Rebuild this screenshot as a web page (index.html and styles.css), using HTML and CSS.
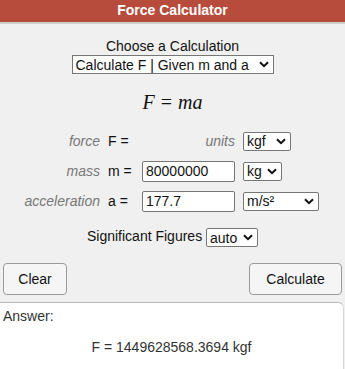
FILE: index.html
```html
<!DOCTYPE html>
<html>
<head>
    <title>Force Calculator</title>
    <link rel="stylesheet" href="styles.css">
</head>
<body>
    <div class="header">Force Calculator</div>

    <div class="chooser">
        <div class="chooser-label">Choose a Calculation</div>
        <select class="sel calc-select">
            <option>Calculate F | Given m and a</option>
        </select>
    </div>

    <div class="formula"><i>F</i><span class="eq">=</span><i>ma</i></div>

    <div class="rows">
        <div class="lbl">force</div>
        <div class="var">F =</div>
        <div class="units-lbl">units</div>
        <div><select class="sel sel-kgf"><option>kgf</option></select></div>

        <div class="lbl">mass</div>
        <div class="var">m =</div>
        <div><input type="text" class="num" value="80000000"></div>
        <div><select class="sel sel-kg"><option>kg</option></select></div>

        <div class="lbl">acceleration</div>
        <div class="var">a =</div>
        <div><input type="text" class="num" value="177.7"></div>
        <div><select class="sel sel-ms"><option>m/s²</option></select></div>
    </div>

    <div class="sigfig">
        Significant Figures
        <select class="sel sel-auto"><option>auto</option></select>
    </div>

    <div class="buttons">
        <button type="button" class="btn btn-clear">Clear</button>
        <button type="button" class="btn btn-calc">Calculate</button>
    </div>

    <div class="answer">
        <div class="answer-label">Answer:</div>
        <div class="answer-value">F = 1449628568.3694 kgf</div>
    </div>
</body>
</html>
```

FILE: styles.css
```css
body {
    font-family: Arial, "Liberation Sans", sans-serif;
    font-size: 14px;
    background-color: #f0f0f0;
    color: #111;
    margin: 0;
    padding: 0;
    overflow: hidden;
}

.header {
    background-color: #b74c3c;
    color: #fff;
    font-weight: bold;
    font-size: 14px;
    text-align: center;
    height: 22px;
    line-height: 21px;
    border-bottom: 2px solid #cfcfcf;
}

.chooser {
    text-align: center;
    margin-top: 14px;
}

.chooser-label {
    line-height: 16px;
}

/* selects drawn with a chevron arrow like the original */
.sel {
    appearance: none;
    -webkit-appearance: none;
    font-family: Arial, "Liberation Sans", sans-serif;
    font-size: 14px;
    height: 19px;
    padding: 0 14px 0 3px;
    border: 1px solid #767676;
    border-radius: 2px;
    color: #111;
    background: #fff url("data:image/svg+xml;utf8,<svg xmlns='http://www.w3.org/2000/svg' width='10' height='7' viewBox='0 0 10 7'><path d='M1 1.2l4 4 4-4' fill='none' stroke='%23111' stroke-width='2'/></svg>") no-repeat right 4px center;
    vertical-align: middle;
}

.calc-select {
    width: 202px;
    height: 19px;
    border-radius: 0;
    margin-top: 1px;
}

.formula {
    text-align: center;
    font-family: "Liberation Serif", "DejaVu Serif", serif;
    font-size: 20px;
    margin-top: 16px;
    line-height: 24px;
}

.formula .eq {
    margin: 0 6px;
}

.rows {
    display: grid;
    grid-template-columns: 108px 34px 101px auto;
    grid-auto-rows: 30px;
    align-items: center;
    margin-top: 12px;
}

.lbl {
    text-align: right;
    padding-right: 8px;
    font-style: italic;
    color: #777;
}

.units-lbl {
    text-align: right;
    padding-right: 8px;
    font-style: italic;
    color: #777;
}

.num {
    font-family: Arial, "Liberation Sans", sans-serif;
    font-size: 14px;
    width: 93px;
    height: 21px;
    box-sizing: border-box;
    padding: 0 3px;
    border: 1px solid #767676;
    border-radius: 2px;
    background: #fff;
    color: #111;
}

.sel-kgf {
    width: 48px;
}

.sel-kg {
    width: 39px;
}

.sel-ms {
    width: 76px;
}

.sel-auto {
    width: 52px;
}

.sigfig {
    text-align: center;
    margin-top: 12px;
}

.buttons {
    display: flex;
    justify-content: space-between;
    padding: 0 3px;
    margin-top: 16px;
}

.btn {
    font-family: Arial, "Liberation Sans", sans-serif;
    font-size: 14px;
    height: 32px;
    background-color: #f5f5f5;
    color: #111;
    border: 1px solid #9a9a9a;
    border-radius: 4px;
    padding: 0;
}

.btn-clear {
    width: 64px;
}

.btn-calc {
    width: 93px;
}

.answer {
    background: #fff;
    margin-top: 7px;
    margin-right: 1px;
    border-top: 1px solid #b8b8b8;
    border-right: 1px solid #d8d8d8;
    border-top-right-radius: 6px;
    height: 80px;
}

.answer-label {
    color: #333;
    padding: 5px 0 0 3px;
    line-height: 16px;
}

.answer-value {
    color: #333;
    text-align: center;
    margin-top: 15px;
}
```
